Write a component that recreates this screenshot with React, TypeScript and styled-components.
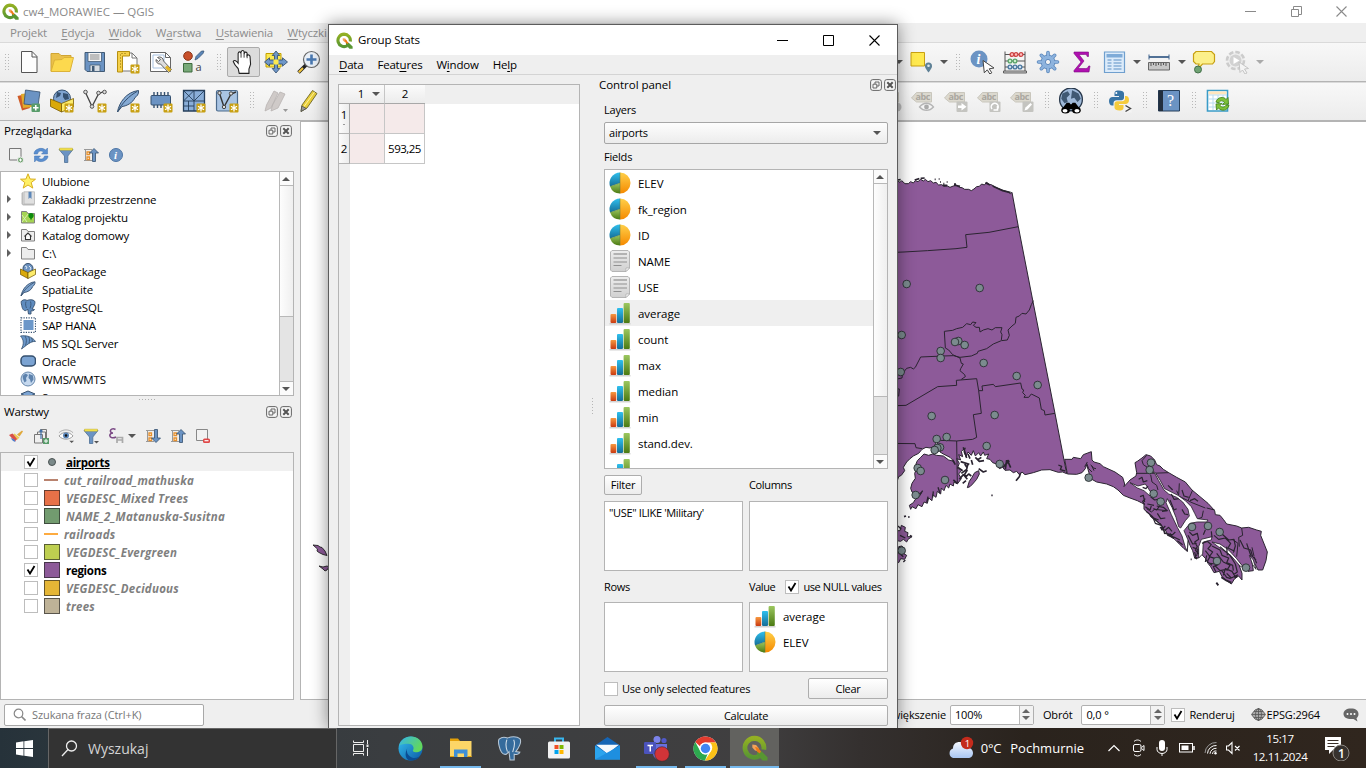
import React from "react";
import styled, { createGlobalStyle, css } from "styled-components";

const Global = createGlobalStyle`
  * { box-sizing: border-box; }
  body { margin: 0; background: #fff; overflow: hidden; }
  svg { display: block; flex: none; }
`;

const Desktop = styled.div`
  position: relative;
  width: 1366px;
  height: 768px;
  overflow: hidden;
  display: flex;
  flex-direction: column;
  background: #efefef;
  font-family: "Open Sans", "Noto Sans", sans-serif;
  font-size: 11.5px;
  letter-spacing: -0.15px;
  color: #000;
  white-space: nowrap;
  cursor: default;
`;

/* ---------- shared parts ---------- */
const Text = styled.span<{ $size?: number; $ls?: number; $color?: string }>`
  line-height: 16px;
  ${(p) => p.$size && css`font-size: ${p.$size}px;`}
  ${(p) => p.$ls !== undefined && css`letter-spacing: ${p.$ls}px;`}
  ${(p) => p.$color && css`color: ${p.$color};`}
`;
const Spacer = styled.div<{ $w?: number }>`
  ${(p) => (p.$w ? css`flex: 0 0 ${p.$w}px;` : css`flex: 1;`)}
`;
const Key = styled.u`
  text-underline-offset: 2px;
`;

type IcoProps = { s?: number; vb?: string; children: React.ReactNode; h?: number };
const Ico = ({ s = 24, h, vb = "0 0 24 24", children }: IcoProps) => (
  <svg width={s} height={h ?? s} viewBox={vb} fill="none">
    {children}
  </svg>
);

const QgisLogo = ({ s = 17 }: { s?: number }) => (
  <Ico s={s}>
    <defs>
      <linearGradient id="qg" x1="0" y1="0" x2="0" y2="1">
        <stop offset="0" stopColor="#93b023" />
        <stop offset="1" stopColor="#589632" />
      </linearGradient>
    </defs>
    <path d="M11.500 3a8.800 8.800 0 1 0 4.500 16.400M11.500 3a8.800 8.800 0 0 1 8.600 10.500" stroke="url(#qg)" strokeWidth="4.400" />
    <path d="M14 15h4l5.500 5.500v3h-4.500L14 18.500z" fill="#589632" />
    <path d="M9.500 8.800l3.500.4 2.500 3-1 2.500-2.500-.5-2.500-2.700z" fill="#f2a25a" />
    <path d="M12 11l2.500.5 3 3.500-1 2-2.500-1.500z" fill="#ee7913" />
  </Ico>
);

const PlusBadge = () => (
  <g>
    <rect x="14.500" y="14.500" width="8.500" height="8.500" rx="1" fill="#589c6a" />
    <path d="M18.750 16v5.500M16 18.750h5.500" stroke="#fff" strokeWidth="1.600" />
  </g>
);
const StarBadge = () => (
  <g>
    <rect x="14.500" y="14.500" width="9" height="9" rx="1" fill="#c8a012" />
    <path d="M19 15.500v7M16 17.300l6 3.400M22 17.300l-6 3.400" stroke="#fff" strokeWidth="1.300" />
  </g>
);

/* ---------- toolbar icons ---------- */
const I: Record<string, React.ReactNode> = {
  newDoc: <Ico><path d="M4.500 1.500h10.500l5 5v16h-15.500z" fill="#fdfdfd" stroke="#555" /><path d="M15 1.500v5.500h5" stroke="#555" /></Ico>,
  open: <Ico><path d="M1 21V3.500h8l2 2h10V9" fill="#eac04a" stroke="#d0a534" /><path d="M1 21.500L4.500 10l7.500-.5 2-2h9.500L20 21.500z" fill="#fcd94e" stroke="#dcb238" /></Ico>,
  save: <Ico><path d="M2 2.500h19.500v19H4L2 19.500z" fill="#6b93c3" stroke="#415a75" /><path d="M5 2.500h13.500v9H5z" fill="#f4f4f4" stroke="#415a75" strokeWidth=".8" /><path d="M7 5h9.500M7 7h9.500M7 9h9.500" stroke="#888" /><path d="M7 15h10v6.500H7z" fill="#d6dce2" stroke="#415a75" strokeWidth=".8" /><path d="M9 16h2.500v5H9z" fill="#415a75" /></Ico>,
  layout: <Ico><path d="M6 3h10l5 5v13H6z" fill="#fff" stroke="#777" /><path d="M16 3v5h5" stroke="#777" /><path d="M1.500 1.500h12v4.500H6.500v16h-5z" fill="#f5d04a" stroke="#b58f10" /><path d="M4 5h1M4 8h1M4 11h1M4 14h1M4 17h1M6 3v1M9 3v1" stroke="#8a6d0a" /><StarBadge /></Ico>,
  manager: <Ico><path d="M1.500 2.500h15l5 5v14h-20z" fill="#fff" stroke="#666" /><path d="M16.500 2.500v5h5" stroke="#666" /><path d="M4 5h11v13H4z" stroke="#a7c1e0" /><path d="M8.500 7.500a4 4 0 0 1 6 3.500l8 8.500-3 3-8-8.500a4 4 0 0 1-4.500-4.500l2.500 2 2-2z" fill="#ddd" stroke="#555" strokeWidth=".9" /><path d="M18 15.500l4.500 4-2.500 2.500-4-4.500z" fill="#e2b526" /></Ico>,
  style: <Ico><circle cx="6" cy="6" r="4.300" fill="#c8502a" stroke="#8b3518" /><path d="M1.500 13.500h8.500v8.500H1.500z" fill="#78a978" stroke="#3e6b3e" /><path d="M13 10l1-3.500 5.500-5.500h2.500L21 3.500 16 8.500z" fill="#5b86b8" stroke="#35506f" strokeWidth=".7" /><text x="13.500" y="21" fontSize="11" fill="#444">a</text></Ico>,
  hand: <Ico s={26}><path d="M8.500 22.500L7.500 18C5 15.500 3.500 13 3 11.500c1-1.800 3-.6 4.500 1.500V4c.5-2 2.300-1.600 2.500 0l.3-1.500c.6-1.600 2.400-1.400 2.700 0l.2 1.200c.6-1.300 2.300-1 2.600.3v2c1-1.200 2.500-.5 2.700 1l.5 7-1.500 4.500v4z" fill="#fff" stroke="#222" /><path d="M10.200 4v4M13 3.500V8M15.800 5v3.500" stroke="#222" strokeWidth=".8" /></Ico>,
  panSel: <Ico><path d="M2 3.500h15v13.500H2z" fill="#fce94f" stroke="#c4a000" /><path d="M12 1l3.800 4.500h-2.300V10h5V7.800L23.500 12l-5 4.200V14h-5v4.500h2.300L12 23l-3.800-4.500h2.300V14h-5v2.200L.5 12l5-4.200V10h5V5.500H8.200z" fill="#6f97c8" stroke="#2e4a6b" strokeWidth=".8" /><rect x="9.500" y="9.500" width="5" height="5" fill="#fce94f" /></Ico>,
  zoomIn: <Ico><path d="M9.500 14.500l-8 8" stroke="#222" strokeWidth="3.600" /><path d="M6 18l-4.200 4.200" stroke="#f3c63b" strokeWidth="2" /><circle cx="14.500" cy="9.500" r="8" fill="#e9eff6" stroke="#666" strokeWidth="1.200" /><path d="M14.500 4.500v10M9.500 9.500h10" stroke="#4a78b0" strokeWidth="2.600" /></Ico>,
  dsm: <Ico><path d="M.5 7L9 5l4 14-8 2.500z" fill="#cf5b27" /><path d="M4 5l9-1 2 14-9 1z" fill="#e2ab2c" /><path d="M8.500 1l14.500 2-2 13.500L7 15z" fill="#6b93c3" stroke="#35506f" strokeWidth=".8" /><PlusBadge /></Ico>,
  gpkg: <Ico><circle cx="12" cy="9.500" r="8.500" fill="#7fa3cf" stroke="#35506f" /><path d="M7 3l4 1-1 3-4 2zM13 4l5 1 1 5-4 1-2-3z" fill="#35506f" /><path d="M.5 10l11 4.500v8.500L.5 17.500z" fill="#d9a90a" stroke="#7a5c00" strokeWidth=".8" /><path d="M23.500 9.500L11.500 14.500v8.500l12-5z" fill="#fceb6b" stroke="#7a5c00" strokeWidth=".8" /><StarBadge /></Ico>,
  shp: <Ico><path d="M2.500 3.500l6.500 14 6.500-12.500 5-2.500" stroke="#444" strokeWidth="1.300" /><circle cx="2.500" cy="3" r="1.800" fill="#ddd" stroke="#555" /><circle cx="9" cy="17.500" r="1.800" fill="#ddd" stroke="#555" /><circle cx="15.500" cy="4" r="1.800" fill="#ddd" stroke="#555" /><circle cx="21.500" cy="3" r="1.800" fill="#ddd" stroke="#555" /><StarBadge /></Ico>,
  feather: <Ico><path d="M1.500 23C3 14 10 3 22.500 1.500c.5 4-2 6-3.500 7-2 5-8 8.500-13 9z" fill="#85aad4" stroke="#35506f" /><path d="M1.500 23C6 14 13 7 21 2.500" stroke="#35506f" /><StarBadge /></Ico>,
  chip: <Ico><path d="M5 3v16M8.500 3v16M12 3v16M15.500 3v16M19 3v16" stroke="#35506f" strokeWidth="1.400" /><rect x="2" y="6.500" width="19.500" height="9.500" rx="1" fill="#6b93c3" stroke="#35506f" /><StarBadge /></Ico>,
  mesh: <Ico><path d="M1.500 1.500h21v20.500h-21z" fill="#8aaed8" stroke="#263f5b" strokeWidth="1.300" /><path d="M12 1.500V22M1.500 12h21M1.500 1.500L12 12M12 1.500L1.500 12M12 12L22.500 1.500M6.500 12v10M1.500 17H12" stroke="#263f5b" strokeWidth=".9" /><StarBadge /></Ico>,
  virtual: <Ico><rect x="1.500" y="1.500" width="21" height="20.500" rx="1.500" fill="#a9c4e3" stroke="#4b6a8c" strokeWidth="1.200" /><path d="M4.500 4.500L9 18 16 5l5-2" stroke="#333" strokeWidth="1.400" /><circle cx="4.500" cy="4" r="1.700" fill="#ddd" stroke="#444" /><circle cx="9" cy="18" r="1.700" fill="#ddd" stroke="#444" /><circle cx="16" cy="4.500" r="1.700" fill="#ddd" stroke="#444" /><StarBadge /></Ico>,
  pencils: <Ico><path d="M1 22l1.500-6L10 2l4 2-7 15zM7 22l1.500-6L16 3l5 2-7 14z" fill="#cfcac8" stroke="#b8b3b1" strokeWidth=".8" /><path d="M19 20h5l-2.500 3z" fill="#999" /></Ico>,
  pencil: <Ico><path d="M4 22.500l1-6.500L15.500 1.500l4.500 3L10 19z" fill="#e9cf3c" stroke="#6d6426" strokeWidth=".9" /><path d="M7 17.500L17.500 3" stroke="#fff3a0" /><path d="M4 22.500l.8-5.500 4.500 2.500z" fill="#999" stroke="#444" strokeWidth=".7" /></Ico>,
  note: <Ico><path d="M2 2.500h13.500v13.500H2z" fill="#ffe94f" stroke="#c8a012" /><path d="M19.500 22.500c-3-4-3.500-5-3.500-6.500a3.500 3.500 0 0 1 7 0c0 1.500-.5 2.500-3.500 6.500z" fill="#5f8196" /><circle cx="19.500" cy="15.800" r="1.300" fill="#dfe9ef" /></Ico>,
  identify: <Ico><circle cx="9" cy="9" r="8.500" fill="#6b93c3" /><text x="6.500" y="14" fontSize="14" fontStyle="italic" fontWeight="700" fontFamily="Liberation Serif, serif" fill="#fff">i</text><path d="M13 10.500l11 7.500-4.800.8 2.600 4-2 1.200-2.500-4.200-3 3z" fill="#fff" stroke="#444" /></Ico>,
  abacus: <Ico><path d="M2 22V1.500M22 22V1.500M2 4.500h20M2 11h20M2 17h20" stroke="#555" /><path d="M.5 21h23v2H.5z" fill="#ccc" stroke="#444" strokeWidth=".8" /><g strokeWidth="1.300"><g stroke="#c44" fill="#fbb"><circle cx="9" cy="4.500" r="1.900" /><circle cx="13" cy="4.500" r="1.900" /><circle cx="18" cy="4.500" r="1.900" /></g><g stroke="#5aa36a" fill="#cec"><circle cx="7" cy="11" r="1.900" /><circle cx="12" cy="11" r="1.900" /></g><g stroke="#4a78a0" fill="#cde"><circle cx="7" cy="17" r="1.900" /><circle cx="12" cy="17" r="1.900" /><circle cx="17" cy="17" r="1.900" /></g></g></Ico>,
  gear: <Ico><g stroke="#5d89bd" strokeWidth="3.600" strokeLinecap="round"><path d="M12 2.500v19M2.500 12h19M5.300 5.300l13.400 13.400M18.700 5.300L5.300 18.700" /></g><circle cx="12" cy="12" r="7" fill="#8db3de" stroke="#5d89bd" /><g stroke="#8db3de" strokeWidth="2" strokeLinecap="round"><path d="M12 2.500v19M2.500 12h19M5.300 5.300l13.400 13.400M18.700 5.300L5.300 18.700" /></g><circle cx="12" cy="12" r="2.600" fill="#f4f4f4" stroke="#5d89bd" /></Ico>,
  sigma: <Ico><path d="M5 2h14.500v4.500h-1.300c-.3-1.500-1-2-2.500-2H10l5 6.500-6 7.500h7.700c1.600 0 2.300-.8 3-2.500H21L20 22H5v-1.500l7-8.500-7-8.500z" fill="#b010b0" stroke="#7b0b80" strokeWidth=".6" /></Ico>,
  table: <Ico><path d="M2.500 2h20v20.500h-20z" fill="#dcebfa" stroke="#6f9fce" strokeWidth="1.200" /><path d="M4.500 4h16v3.500h-16z" fill="#7eabd8" /><path d="M5.500 10h4M11.500 10h8M5.500 13h4M11.500 13h8M5.500 16h4M11.500 16h8M5.500 19h4M11.500 19h8" stroke="#5a8fc4" strokeWidth="1.200" /></Ico>,
  ruler: <Ico><path d="M2 7h20" stroke="#3f628c" strokeWidth="1.800" /><path d="M2 4.500v5M22 4.500v5" stroke="#3f628c" /><path d="M1.500 12.500h21v7.500h-21z" fill="#c6c6c6" stroke="#666" /><path d="M4 13v3M6.500 13v2M9 13v3M11.500 13v2M14 13v3M16.500 13v2M19 13v3" stroke="#555" /></Ico>,
  tip: <Ico><path d="M4 1.500h15.500l3 3v7l-2 2.500h-10L6 19l1-5H4l-2.500-2.500V4z" fill="#fcf08a" stroke="#c8a012" strokeWidth="1.200" /><circle cx="6" cy="19.500" r="3.500" fill="#6fa373" stroke="#44704a" /></Ico>,
  action: <Ico><circle cx="10.500" cy="10.500" r="8.500" fill="#eee" stroke="#ccc" strokeWidth="2.600" strokeDasharray="4.600 2" /><circle cx="10.500" cy="10.500" r="6" fill="#d2d2d2" /><path d="M8.500 7l6 3.500-6 3.500z" fill="#fff" /><path d="M14 12l9.500 6.500-4 .5 2.500 4-2 1-2.500-4-2.500 2.500z" fill="#f4f4f4" stroke="#c4c4c4" /></Ico>,
  globe: <Ico s={26}><circle cx="12" cy="10.500" r="10.500" fill="#9fb9d9" stroke="#27374a" strokeWidth="1.200" /><path d="M4 5l5-2 2 3-3 3 1 4-3 1-3-4zM13 2l6 3 2 5-3 3-3-4-3 1z" fill="#3f5873" /><path d="M8 13.500h2.500l1 1.500h1l1-1.500H16l4.500 6H3.500z" fill="#000" /><ellipse cx="7" cy="20.500" rx="4" ry="3" fill="#000" /><ellipse cx="17" cy="20.500" rx="4" ry="3" fill="#000" /><ellipse cx="6.500" cy="21" rx="2.300" ry="1.600" fill="#fff" /><ellipse cx="17.500" cy="21" rx="2.300" ry="1.600" fill="#fff" /></Ico>,
  python: <Ico><path d="M10.500 1.500c-3.500 0-4 1.500-4 3V7h4.500v1H4.500C2.500 8 1 9.500 1 12s1.200 4.500 3 4.500h1.500v-2.300c0-1.700 1.300-3 3-3h5c1.300 0 2.500-1.200 2.500-2.500V4.500c0-2-2-3-5.500-3z" fill="#3874a5" /><path d="M11.500 21.500c3.500 0 4-1.500 4-3V16H11v-1h6.500c2 0 3.500-1.500 3.500-4S19.800 7 18 7h-1v2.500c0 1.700-1.300 2.800-3 2.800H9c-1.300 0-2.500 1.200-2.500 2.500v3.700c0 2 2 3 5 3z" fill="#f5cb3c" /><circle cx="8.300" cy="4" r="1" fill="#fff" /><path d="M16.500 15.500h7v8h-7z" fill="#f4f4f4" /><path d="M17.500 16.500l5 3-5 3" stroke="#444" strokeWidth="1.400" /></Ico>,
  help: <Ico><path d="M1.500 1.500h21v20.500h-21z" fill="#6b93c3" stroke="#263f5b" /><path d="M1.500 1.500h4.500v20.500H1.500z" fill="#222f3e" /><text x="10" y="17" fontSize="16" fontFamily="Liberation Serif, serif" fill="#fff">?</text></Ico>,
  refreshTable: <Ico><path d="M1.500 1.500h20v20.500h-20z" fill="#fff" stroke="#3a9cc8" strokeWidth="1.600" /><path d="M2.500 2.500h18v3h-18z" fill="#ffe6bd" /><path d="M7 6v15M12 6v15M17 6v15M2 6h19M2 10h19M2 14h19M2 18h19" stroke="#b9dcf0" /><path d="M10 13c1-5 8-6 10-2.500L22 8.500l.5 6.500-6 .5 2-2c-2-2.500-5-2-5.500.5zM23 16c-1 6-8 6.500-10.500 3l-2 2-.5-6 6-.5-2 2c2 2.500 5.500 1.500 6-.5z" fill="#7cc03a" stroke="#3d7d12" strokeWidth=".8" /></Ico>,
};

const LabelTag = ({ kind }: { kind: "ball" | "eye" | "arrow" | "rotate" | "edit" }) => (
  <Ico>
    <path d="M.5 9l5-5.500h15v9.500H5.500z" fill="#dcd9cf" stroke="#c9c6bc" />
    <text x="4.500" y="11" fontSize="9" fontFamily="Open Sans, sans-serif" fontWeight="700" letterSpacing="-.4" fill="#aaa79f">abc</text>
    {kind === "ball" && <circle cx="19" cy="18" r="4.500" fill="#bbb" />}
    {kind === "eye" && <g><path d="M8.500 18c4-5 10-5 14 0-4 4.500-10 4.500-14 0z" fill="#f4f4f4" stroke="#b5b5b5" strokeWidth="1.300" /><circle cx="15.500" cy="18" r="2.400" fill="#aaa" /></g>}
    {(kind === "arrow" || kind === "rotate" || kind === "edit") && <rect x="12.500" y="12.500" width="11" height="10.500" rx="1" fill="#c4c4c0" />}
    {kind === "arrow" && <path d="M14 16.500h3.500V14l5 3.800-5 3.800v-2.500H14z" fill="#fff" />}
    {kind === "rotate" && <path d="M15 20a3.500 3.500 0 1 1 5 .5M20.500 17v4h-4" stroke="#fff" strokeWidth="1.500" />}
    {kind === "edit" && <path d="M14.500 21.500l1-3 5-4.500 1.500 1.500-4.500 5z" fill="#fff" />}
  </Ico>
);

/* ---------- QGIS main window chrome ---------- */
const TitleBar = styled.div`
  height: 23px;
  flex: none;
  background: #fff;
  display: flex;
  align-items: center;
  padding-left: 2px;
  color: #8a8a8a;
`;
const MenuBar = styled.div`
  height: 19px;
  flex: none;
  display: flex;
  align-items: center;
  padding: 1px 0 0 10px;
  gap: 14.3px;
  color: #8c8c8c;
  background: #efefef;
`;
const Toolbar = styled.div<{ $h: number; $lift?: number }>`
  height: ${(p) => p.$h}px;
  flex: none;
  display: flex;
  align-items: center;
  padding: 0 0 ${(p) => p.$lift ?? 0}px 0.5px;
  border-top: 1px solid #dadada;
  border-bottom: 1px solid #b4b4b4;
  background: linear-gradient(#f8f8f8, #ececec);
`;
const Slot = styled.div<{ $active?: boolean }>`
  flex: 0 0 33px;
  height: 30px;
  display: flex;
  align-items: center;
  justify-content: center;
  ${(p) => p.$active && css`
    background: #dcdcdc;
    border: 1px solid #ababab;
    border-radius: 2px;
  `}
`;
const Grip = styled.div<{ $w?: number }>`
  flex: 0 0 ${(p) => p.$w ?? 16}px;
  display: flex;
  justify-content: center;
  &::before {
    content: "";
    width: 4px;
    height: 17px;
    background: repeating-linear-gradient(#b8b8b8 0 1px, transparent 1px 3px);
    mask: linear-gradient(90deg, #000 1px, transparent 1px 3px, #000 3px);
  }
`;
const Drop = styled.div<{ $w?: number; $c?: string }>`
  flex: 0 0 ${(p) => p.$w ?? 12}px;
  display: flex;
  justify-content: center;
  &::before {
    content: "";
    border: 4px solid transparent;
    border-top-color: ${(p) => p.$c ?? "#555"};
    border-bottom: 0;
  }
`;
const WinButtons = styled.div<{ $c: string; $gap: number; $pad: number }>`
  display: flex;
  align-items: center;
  gap: ${(p) => p.$gap}px;
  padding-right: ${(p) => p.$pad}px;
  color: ${(p) => p.$c};
`;
const WinIcons = ({ restore }: { restore?: boolean }) => (
  <>
    <Ico s={11} vb="0 0 11 11"><path d="M0 5.500h11" stroke="currentColor" /></Ico>
    <Ico s={11} vb="0 0 11 11">
      {restore ? <path d="M.5 3.500h7v7h-7zM2.500 3.500v-3h8v8h-3" stroke="currentColor" /> : <path d="M.5.5h10v10H.5z" stroke="currentColor" />}
    </Ico>
    <Ico s={11} vb="0 0 11 11"><path d="M.5.5l10 10M10.500.5l-10 10" stroke="currentColor" strokeWidth="1.100" /></Ico>
  </>
);

/* ---------- docks ---------- */
const Body = styled.div`
  height: 580px;
  flex: none;
  display: flex;
`;
const Docks = styled.div`
  width: 300px;
  display: flex;
  flex-direction: column;
`;
const DockHead = styled.div<{ $h: number }>`
  height: ${(p) => p.$h}px;
  flex: none;
  display: flex;
  align-items: center;
  padding: 0 8px 0 4px;
  gap: 2px;
`;
const DockBtn = ({ close }: { close?: boolean }) => (
  <Ico s={12} vb="0 0 12 12">
    <rect x=".6" y=".6" width="10.800" height="10.800" rx="2.200" stroke="#666" fill="#f6f6f6" />
    {close ? <path d="M3.300 3.300l5.400 5.400M8.700 3.300L3.300 8.700" stroke="#555" strokeWidth="2" /> : <path d="M3 5.200h3.800V9H3zM5 5V3h4v4H7" stroke="#666" />}
  </Ico>
);
const DockTools = styled.div<{ $h: number }>`
  height: ${(p) => p.$h}px;
  flex: none;
  display: flex;
  align-items: center;
  padding: 0 0 2px 8px;
  gap: 9px;
`;
const ToolWithMenu = styled.div`
  width: 28px;
  display: flex;
  align-items: center;
  gap: 4px;
`;
const Panel = styled.div<{ $h: number; $w?: number }>`
  width: ${(p) => p.$w ?? 294}px;
  height: ${(p) => p.$h}px;
  flex: none;
  background: #fff;
  border: 1px solid #b4b4b4;
  display: flex;
  overflow: hidden;
`;
const List = styled.div`
  flex: 1;
  overflow: hidden;
`;
const TreeRow = styled.div`
  height: 18px;
  display: flex;
  align-items: center;
  padding: 2px 0 0 6px;
`;
const Twist = styled.div<{ $on?: boolean }>`
  width: 13px;
  &::before {
    content: "";
    display: ${(p) => (p.$on ? "block" : "none")};
    width: 0;
    border: 4px solid transparent;
    border-left-color: #606060;
    border-right: 0;
    margin-top: -3px;
  }
`;
const TreeIcon = styled.div`
  width: 16px;
  margin-right: 6px;
  margin-top: -2px;
`;
const Bar = styled.div`
  width: 14px;
  flex: none;
  display: flex;
  flex-direction: column;
  border-left: 1px solid #b8b8b8;
  background: #e4e4e4;
`;
const BarEnd = styled.div<{ $down?: boolean }>`
  height: 14px;
  flex: none;
  background: #fbfbfb;
  border-${(p) => (p.$down ? "top" : "bottom")}: 1px solid #b8b8b8;
  display: flex;
  align-items: center;
  justify-content: center;
  padding-right: 1px;
  &::before {
    content: "";
    border: 4px solid transparent;
    ${(p) => (p.$down ? "border-top-color: #555; border-bottom: 0;" : "border-bottom-color: #555; border-top: 0;")}
  }
`;
const Thumb = styled.div<{ $h: number }>`
  height: ${(p) => p.$h}px;
  background: linear-gradient(90deg, #fdfdfd, #efefef);
  border-bottom: 1px solid #b8b8b8;
`;
const Splitter = styled.div<{ $h: number }>`
  height: ${(p) => p.$h}px;
  width: 294px;
  flex: none;
  display: flex;
  justify-content: center;
  align-items: center;
  &::before {
    content: "";
    width: 17px;
    height: 1px;
    background: repeating-linear-gradient(90deg, #b0b0b0 0 1px, transparent 1px 3px);
  }
`;

const Folder = ({ children, fill = "#ededed" }: { children?: React.ReactNode; fill?: string }) => (
  <Ico s={16} vb="0 0 16 16"><path d="M1.500 2.500h5l1.500 2h6.500v9.500h-13z" fill={fill} stroke="#808080" />{children}</Ico>
);
const browser: [string, boolean, React.ReactNode][] = [
  ["Ulubione", false, <Ico s={16} vb="0 0 16 16"><path d="M8 .8l2.100 5.200 5.400.2-4.300 3.400 1.600 5.500L8 12l-4.800 3.100 1.600-5.500L.5 6.200l5.400-.2z" fill="#fff066" stroke="#d8ae1e" /></Ico>],
  ["Zakładki przestrzenne", true, <Ico s={16} vb="0 0 16 16"><path d="M1.500 2l2-1.500V13h11v1.500H3L1.500 13z" fill="#bbb" /><path d="M4 .8h10.500V13H4z" fill="#e0e0e0" stroke="#b5b5b5" strokeWidth=".8" /><path d="M8.500.8h3V8L10 6.500 8.500 8z" fill="#5b86b8" /></Ico>],
  ["Katalog projektu", true, <Folder fill="#a6d454"><path d="M2 6l5 7M2 13l6-8" stroke="#d9f0b0" /><circle cx="11" cy="6.500" r="2.600" fill="#0c8a0c" /><path d="M9.500 8l1.500 3.500L12.500 8z" fill="#0c8a0c" /></Folder>],
  ["Katalog domowy", true, <Folder><path d="M4.500 9.500L8 6l3.500 3.500M5.500 9v3.500h5V9" stroke="#333" strokeWidth="1.100" fill="#fff" /></Folder>],
  ["C:\\", true, <Folder />],
  ["GeoPackage", false, <Ico s={16} vb="0 0 16 16"><circle cx="8" cy="5.500" r="5" fill="#6d93c0" stroke="#35506f" /><path d="M5 3l2 1-1 2M9 3l2 2-1 2" stroke="#dce8f5" /><path d="M.5 6l7.500 3.500v6L.5 11.500z" fill="#d9a90a" stroke="#6b5200" strokeWidth=".7" /><path d="M15.500 6L8 9.500v6l7.500-4z" fill="#fceb6b" stroke="#6b5200" strokeWidth=".7" /></Ico>],
  ["SpatiaLite", false, <Ico s={16} vb="0 0 16 16"><path d="M1 15C2 9 7 1.500 15 .8c.3 2.700-1.500 4-2.300 4.700C11.500 9 8 11 4 11.500z" fill="#7ea4cf" stroke="#35506f" strokeWidth=".9" /><path d="M1 15C4 9 8 5 14 1.500" stroke="#35506f" strokeWidth=".8" /></Ico>],
  ["PostgreSQL", false, <Ico s={16} vb="0 0 16 16"><path d="M1.500 2C4 0 6 .8 7 1.500 9 .5 13 .3 14.500 2c1.300 2-.5 5.500-2.500 8l2.500.5c-.7 1.500-2.500 1.500-3.500 1.200V15H8.500l-.8-5-1.500 1.500c-2.700.8-4-2-4.500-5C1.200 4 .9 3 1.500 2z" fill="#5f8cbf" stroke="#35506f" strokeWidth=".9" /><path d="M6 2.500c-1 3 0 5 .5 6.500M10.500 2.500c1 3 0 5-.5 7" stroke="#35506f" strokeWidth=".8" /></Ico>],
  ["SAP HANA", false, <Ico s={16} vb="0 0 16 16"><rect x="3.500" y="3" width="10" height="10" fill="#6b97c9" /><rect x="1" y=".8" width="14.500" height="14.500" stroke="#35506f" strokeWidth="1.200" strokeDasharray="1.200 1.300" /></Ico>],
  ["MS SQL Server", false, <Ico s={16} vb="0 0 16 16"><path d="M.5 1c5-1 12 .5 15 5.500-5-.5-9 4-14 7.500C4 9 4 5 .5 1z" fill="#6b97c9" stroke="#35506f" strokeWidth=".8" /><path d="M5 1c2 3 1.500 6 .5 9.500M8.500 1.500c1.500 2.500 1 4.500.5 7M11.500 3c1 1.500 1 2.500.5 4" stroke="#35506f" strokeWidth=".8" /></Ico>],
  ["Oracle", false, <Ico s={16} vb="0 0 16 16"><rect x="1" y="3" width="14.500" height="10" rx="4" fill="#7ba3d2" stroke="#35506f" strokeWidth="1.500" /></Ico>],
  ["WMS/WMTS", false, <Ico s={16} vb="0 0 16 16"><circle cx="8" cy="8" r="7" fill="#c5d8ee" stroke="#6787ab" /><path d="M2.500 5l3-2.500L8 4 6 7l.5 3-2 1.500L3 8zM9 3l4 1.500.5 4L11 12l-1-3.500L8.500 7z" fill="#5d82ad" /></Ico>],
  ["Scenes", false, <Ico s={16} vb="0 0 16 16"><path d="M1 5l7-3 7 3-7 3z" fill="#7ba3d2" stroke="#35506f" /></Ico>],
];

const LayerRow = styled.div<{ $sel?: boolean }>`
  height: 18px;
  display: flex;
  align-items: center;
  padding-left: 23px;
  background: ${(p) => (p.$sel ? "#f0f0f0" : "transparent")};
`;
const Check = styled.span`
  width: 14px;
  height: 14px;
  flex: none;
  border: 1px solid #bdbdbd;
  background: #fff;
  display: flex;
  align-items: center;
  justify-content: center;
`;
const CheckBox = ({ on }: { on?: boolean }) => (
  <Check>{on && <Ico s={10} vb="0 0 10 10"><path d="M1.500 4.500L4 8.500 8.500 1" stroke="#000" strokeWidth="1.800" /></Ico>}</Check>
);
const Swatch = styled.span<{ $c: string; $kind: "dot" | "line" | "fill" }>`
  flex: none;
  ${(p) =>
    p.$kind === "fill"
      ? css`width: 16px; height: 16px; margin: 0 6px; background: ${p.$c}; border: 1px solid rgba(35, 35, 35, 0.65);`
      : p.$kind === "line"
        ? css`width: 14px; height: 2px; margin: 0 6px; background: ${p.$c};`
        : css`width: 8px; height: 8px; margin: -1px 10px 0 10px; border-radius: 50%; background: ${p.$c}; border: 1px solid #4b5353;`}
`;
const LayerName = styled.span<{ $on?: boolean; $u?: boolean }>`
  font-weight: 700;
  font-size: 11.5px;
  letter-spacing: 0.25px;
  padding-top: 1px;
  ${(p) => (p.$on ? css`letter-spacing: -0.3px;` : css`font-style: italic; color: #7f7f7f;`)}
  ${(p) => p.$u && css`text-decoration: underline;`}
`;
type L = { n: string; c: string; k: "dot" | "line" | "fill"; on?: boolean; u?: boolean };
const layers: L[] = [
  { n: "airports", c: "#7b8a8a", k: "dot", on: true, u: true },
  { n: "cut_railroad_mathuska", c: "#b9836f", k: "line" },
  { n: "VEGDESC_Mixed Trees", c: "#e77148", k: "fill" },
  { n: "NAME_2_Matanuska-Susitna", c: "#729b6f", k: "fill" },
  { n: "railroads", c: "#fdab40", k: "line" },
  { n: "VEGDESC_Evergreen", c: "#becf50", k: "fill" },
  { n: "regions", c: "#8d5a99", k: "fill", on: true },
  { n: "VEGDESC_Deciduous", c: "#e5b636", k: "fill" },
  { n: "trees", c: "#beb297", k: "fill" },
];

const treeArrow = (up: boolean) => (
  <Ico s={16} vb="0 0 16 16">
    <path d="M1 2.500h8M1 13.500h8M2.500 2v11" stroke="#999" /><path d="M4 5h2.500v2.500H4zM4 10h2.500v2.500H4z" fill="#fff" stroke="#e8912d" strokeWidth="1.300" />
    {up ? <path d="M11 1.500L15.500 6h-3v8.500h-3V6h-3z" fill="#6b93c3" stroke="#35506f" strokeWidth=".8" /> : <path d="M11 14.500L6.500 10h3V1.500h3V10h3z" fill="#6b93c3" stroke="#35506f" strokeWidth=".8" />}
  </Ico>
);
const funnel = (drop?: boolean) => (
  <Ico s={16} vb="0 0 16 16"><path d="M1 2.500h14L9.800 9v6.500H6.500V9z" fill="#6b93c3" stroke="#4d7096" strokeWidth=".8" /><path d="M1.500 1.200h13v2h-13z" fill="#fbe94e" stroke="#b9a321" strokeWidth=".5" />{drop && <path d="M11 13h5l-2.500 2.500z" fill="#555" />}</Ico>
);

/* ---------- map ---------- */
const MapView = styled.div`
  flex: 1;
  height: 579px;
  background: #fff;
  border: 1px solid #b4b4b4;
  border-width: 1px 0 1px 1px;
  overflow: hidden;
`;
const mainDots = [[50, 372], [269, 384], [35, 525], [205, 543], [195, 546], [224, 555], [152, 573], [152, 594], [32, 636], [281, 609], [380, 648], [443, 675], [125, 768], [314, 765], [140, 837], [170, 831], [150, 862], [142, 864], [134, 870], [290, 858], [329, 912], [83, 924], [92, 933], [165, 960], [77, 1005], [35, 1172]];
const southDots = [[86, 143], [273, 98], [269, 120], [281, 191], [302, 215], [396, 291], [444, 288], [479, 306], [471, 393], [558, 413]];
const Airports = ({ pts }: { pts: number[][] }) => (
  <g fill="#7b8b8e" stroke="#262c2e" strokeWidth="2.600">
    {pts.map(([x, y]) => <circle key={`${x}-${y}`} cx={x} cy={y} r="11.500" />)}
  </g>
);
const MapDrawing = () => (
  <svg width="1065" height="577" viewBox="301 122 1065 577" fill="none" strokeLinejoin="round">
    <path fill="#8d5a99" stroke="#232323" strokeWidth=".9" d="M313 545L318 545.500 320 547 322 547.500 325 551 327 555.500 323 554.500 319 552.500 317 551 317.500 549zM319 566L323 567 327 566 329 567 327 570 325 571 323 569z" />
    <g transform="translate(890 160) scale(.33333)" stroke="#2a2430" strokeWidth="3">
      <path
        fill="#8d5a99"
        d="M-20 62L22 62 30 67 35 62 45 71 55 71 62 65 70 69 76 62 84 65 92 58 100 63 106 58 114 65 122 62 130 69 138 67 146 75 155 74 162 79 172 78 180 82 190 78 200 76 208 82 216 83 224 88 236 88 244 92 252 87 260 80 268 79 275 72 283 75 290 67 298 73 306 75 314 81 322 84 332 88 342 92 355 96 361 101 366 97 385 200 428 420 495 760 530 941 518 936 505 937 480 929 455 930 430 938 405 944 396 936 388 944 380 934 370 938 360 930 345 931 338 922 328 926 320 912 308 908 300 898 290 896 296 882 284 886 280 876 272 888 266 878 256 888 250 872 244 886 234 876 228 890 222 876 226 864 214 874 218 890 206 884 212 900 200 896 208 910 202 925 216 930 206 942 214 956 202 972 192 966 190 978 180 972 176 984 168 976 162 992 154 984 152 1002 142 994 138 1012 128 1004 126 1022 116 1014 112 1030 102 1026 96 1040 84 1034 78 1046 66 1040 62 1048 58 1036 70 1028 76 1018 88 1010 94 998 80 1004 66 996 62 985 66 970 76 955 74 940 80 926 78 912 82 902 92 892 102 882 116 886 128 882 140 886 160 888 176 900 192 904 180 892 160 882 150 876 158 866 148 858 140 846 132 860 120 864 108 862 96 868 86 880 70 888 60 896 50 906 40 922 44 932 34 946 26 950 22 962 -20 990Z"
      />
      <path fill="#8d5a99" d="M10 1112L30 1112 34 1096 46 1102 44 1114 54 1118 52 1130 66 1130 54 1138 50 1146 40 1138 32 1144 10 1140zM10 1180L26 1160 36 1158 42 1166 36 1178 50 1186 44 1198 32 1196 26 1208 10 1200zM232 983L238 964 246 952 254 938 266 932 268 942 260 958 248 972 240 980z" />
      <path d="M-10 278L42 276 112 272 198 266 231 262 227 224 297 217 385 200M-10 738L48 736 143 680 200 676 199 661 260 656 266 692 278 692 276 678 310 673 316 680 392 669 396 687 401 690 398 698 406 706 402 712 416 712 424 702 448 714 454 748 463 752 465 765 495 760" />
      <path d="M-10 657L22 657 36 654 38 640 50 625 62 622 70 627 76 622 92 591 160 588 190 587 210 592 244 588 262 580 264 574 290 566 310 552 334 542 352 540 358 526 354 510 366 498 376 490 378 472 388 468 396 460 408 462 418 450 424 434 430 422" />
      <path d="M163 514L188 511 200 506 218 502 230 491 242 494 248 486 258 488 250 496 258 502 268 502 270 516 280 510 294 506 306 510 316 503 336 503 332 516 336 524 334 540M163 514L166 564 176 570 188 584 210 594 214 610 220 612 212 626 210 632 224 644 226 650 214 658M266 692L274 760 250 764 260 832 248 838 200 843 202 970M150 841L200 843M-10 850L75 851 78 863 96 866M0 685L28 687 26 708 20 712" />
      <path d="M220 862l10 32M214 940l16-12 4-18M208 958l12-14 10 4M266 926l14 10 10-4M350 900l-4 28M356 900l-10 14M378 962l10-12 4-12M354 905l8 18M338 922l20-20M232 930l-10 16 10 12M262 900l12-8M240 896l-6-14M212 905l26 8M244 900l4 14M256 892l12 12 14-2M204 922l14 10M224 912l8 12M226 952l10-10 8 6M218 970l10-8M188 900l8 14M190 960l12 10" strokeWidth="5" />
      <path d="M505 915l10 4-4 10 14 4M110 1028l4-18M128 1012l2-18M150 1000l-6-18M90 1004l8-12M24 1098l10 10M30 1126l16 8M20 1172l20 18M40 1206l6-6" strokeWidth="4" />
      <path d="M74 60l14-4M92 55l12-1M134 58h3M146 57h3M150 66h3M160 71h3M170 66h3M158 76h14M192 72h6M42 1070l6-2M54 1071h5M304 1006h4M22 60l10-1M286 68l14 7M192 75l18 4M308 78l30 14 24 6M60 1126l6 4" strokeWidth="5" />
      <Airports pts={mainDots} />
    </g>
    <g transform="translate(1060 430) scale(.33333)" stroke="#2a2430" strokeWidth="3">
      <path
        fill="#8d5a99"
        d="M14 88L36 88 40 82 62 86 70 74 94 65 96 90 102 96 120 101 130 110 165 126 188 142 194 162 192 170 210 150 228 138 230 128 225 98 232 94 246 84 258 74 272 78 284 90 290 104 300 108 310 118 326 128 350 142 376 156 396 180 420 200 444 220 464 242 466 254 480 256 490 268 500 282 530 288 545 294 566 292 590 300 604 304 602 316 610 336 622 366 618 392 608 420 594 420 584 400 576 395 580 422 564 424 545 405 534 396 546 430 546 450 536 438 524 446 514 462 500 452 486 440 478 424 462 428 452 410 444 400 436 385 424 372 416 384 404 384 398 362 390 346 384 330 382 364 372 356 360 344 344 328 330 318 322 312 316 300 304 300 306 288 290 272 274 262 268 252 252 238 252 222 244 218 232 212 210 204 190 196 174 180 160 170 140 162 110 156 92 146 88 132 84 118 80 104 76 116 66 128 50 133 22 132Z"
      />
      <path d="M80 100l6 16 10 10M92 104l8 10 8 2M96 108l6 14M74 110l8-14M228 130L275 130 326 128M260 76L246 92 250 104 262 112M272 134L276 156 290 166 294 180M260 236L274 246 284 238 320 242M350 182L356 196 358 160M360 200L396 218 436 234M398 180L384 212M440 234L464 240M430 242L426 262 410 268M545 294L548 316 536 322 538 350M520 330L534 340 530 380M576 352L582 378" />
      <path fill="#fff" strokeWidth="2.600" d="M274 122L284 130 296 152 312 180 326 192 350 202 368 216 384 238 388 258 376 272 362 294 356 290 348 262 336 232 322 206 318 218 334 254 352 292 366 318 376 352 382 364 384 330 372 302 390 280 412 276 440 276 444 270 412 266 404 250 394 230 376 212 354 196 330 184 314 176 300 150 286 128zM416 350L424 328 456 320 454 330 430 336 428 372 416 384zM456 336L480 342 506 360 530 386 552 414 540 408 512 376 480 354zM210 158L234 168 256 162 272 186 270 198 252 182 232 174zM568 376L580 390 588 418 578 404z" />
      <g strokeWidth="3.600">
        <path d="M236 148l10-6 4 14 12-4M248 172l10 4 6-8M256 206l-8 8 6 10M272 200l12 10 10-2M334 192l8 16 14-2M324 166l14 14M300 226l-10 14-10-4M290 228l20 4 12 10-16 2M276 262l20 8M300 280l10 14 6-6M330 210l12 30 8-4M366 238l8 14 10 2M390 212l14-6 10 8M256 230l14 10 4-12M270 256l30 26M306 290l10 20 20 6M366 180l6 18 14 4M240 200l10-4 4 20M262 222l20 4" />
        <path d="M324 312l14 2 8-8M340 320l20 10M352 332l16 12M292 250l10 16 14-2M316 300l10-8 10 12M258 244l20 16 8 20 18 6M310 296l4 16M330 310l10 14" />
        <path d="M388 306l10 10 14-6 4 18-12 8 8 14-6 10 10 12M384 316l14 26 12-2M398 352l16 6-4 20M436 300l-6 14M426 340l16-6 12 10-10 12 14 10-10 14 18 6 8 18-14 6 8 16M436 362l14 18-8 14 14 12M456 348l24 12 6 16 20 8-6 14 18 8 2 16M470 370l20 26 20 10-10 16M480 350l30 26 16 26 6 24-12 8M462 316l14 12 20-4 16 16-8 14 20 10M486 312l20 18 16-2 4 20-6 20M540 330l12 24 20 6 6 20 10 10M560 340l10 30 4 10M582 380l8 20M500 430l14 14 20-10M484 420l16 22 12 4M456 322l-2-18M450 400l16 2M500 350l2 26M490 436l6-20 20 8 10 16M466 408l14 14 20-4M440 376l-4 20M404 366l4 18" />
        <path d="M392 388h3M469 458l6 8M404 382l8 4M524 444l8-8M484 442l16 10 14 6M300 292l10 6M322 314l20 10" strokeWidth="5.500" />
      </g>
      <Airports pts={southDots} />
    </g>
  </svg>
);

/* ---------- status bar ---------- */
const StatusBar = styled.div`
  height: 27px;
  flex: none;
  display: flex;
  align-items: center;
  padding-left: 4px;
`;
const Locator = styled.div`
  width: 200px;
  height: 22px;
  border: 1px solid #a8a8a8;
  border-radius: 2px;
  background: #fff;
  display: flex;
  align-items: center;
  gap: 6px;
  padding-left: 8px;
  color: #777;
`;
const Spin = styled.div<{ $w: number }>`
  width: ${(p) => p.$w}px;
  height: 20px;
  border: 1px solid #b0b0b0;
  border-radius: 2px;
  background: #fff;
  display: flex;
  align-items: center;
  justify-content: space-between;
  padding-left: 4px;
`;
const SpinBtns = styled.div`
  width: 14px;
  height: 18px;
  border-left: 1px solid #b8b8b8;
  background: #f2f2f2;
  display: flex;
  flex-direction: column;
  align-items: center;
  justify-content: center;
  gap: 3px;
  &::before, &::after { content: ""; border: 4px solid transparent; }
  &::before { border-bottom-color: #666; border-top: 0; }
  &::after { border-top-color: #666; border-bottom: 0; }
`;

/* ---------- Group Stats dialog ---------- */
const Dialog = styled.div`
  position: absolute;
  left: 328px;
  top: 24px;
  width: 570px;
  height: 704px;
  border: 1px solid #5c5c5c;
  border-bottom: 0;
  background: #efefef;
  box-shadow: 0 0 16px rgba(0, 0, 0, 0.45);
  clip-path: inset(-24px -24px 0 -24px);
  display: flex;
  flex-direction: column;
`;
const DialogTitle = styled.div`
  height: 30px;
  flex: none;
  background: #fff;
  display: flex;
  align-items: center;
  padding-left: 7px;
  gap: 5px;
`;
const DialogMenu = styled.div`
  height: 20px;
  flex: none;
  border-bottom: 1px solid #d4d4d4;
  display: flex;
  align-items: center;
  padding-left: 10px;
  gap: 14px;
  letter-spacing: -0.2px;
`;
const DialogBody = styled.div`
  flex: 1;
  display: flex;
`;
const Result = styled.div`
  width: 242px;
  height: 642px;
  margin: 9px 0 0 9px;
  border: 1px solid #b4b4b4;
  background: #fff;
  display: flex;
  flex-direction: column;
`;
const HeadRow = styled.div`
  height: 19px;
  flex: none;
  display: flex;
  background: #efefef;
`;
const HeadCell = styled.div<{ $w: number }>`
  width: ${(p) => p.$w}px;
  background: linear-gradient(#fbfbfb, #ececec);
  border-right: 1px solid #c6c6c6;
  border-bottom: 1px solid #a8a8a8;
  display: flex;
  align-items: center;
  justify-content: center;
  &:last-child { border-right: 0; }
`;
const GridRow = styled.div`
  height: 30px;
  flex: none;
  display: flex;
`;
const RowHead = styled.div`
  width: 11px;
  background: linear-gradient(90deg, #fbfbfb, #ececec);
  border-right: 1px solid #a8a8a8;
  border-bottom: 1px solid #b4b4b4;
  display: flex;
  flex-direction: column;
  align-items: center;
  justify-content: center;
`;
const SortTick = styled.span`
  width: 2px;
  height: 1px;
  margin: 1px 0 6px;
  background: #999;
`;
const Cell = styled.div<{ $w: number; $tint?: boolean }>`
  width: ${(p) => p.$w}px;
  background: ${(p) => (p.$tint ? "#f5eaea" : "#fff")};
  border-right: 1px solid #c6c6c6;
  border-bottom: 1px solid #c6c6c6;
  display: flex;
  align-items: center;
  justify-content: center;
`;
const Gutter = styled.div`
  flex: 1;
  width: 11px;
  background: #efefef;
`;
const SideGrip = styled.div`
  width: 24px;
  display: flex;
  align-items: center;
  justify-content: center;
  padding-top: 10px;
  &::before {
    content: "";
    width: 1px;
    height: 17px;
    background: repeating-linear-gradient(#b6b6b6 0 1px, transparent 1px 3px);
  }
`;
const Controls = styled.div`
  width: 284px;
  display: flex;
  flex-direction: column;
`;
const ControlHead = styled.div`
  height: 20px;
  margin: 0 -8px 0 -5px;
  display: flex;
  align-items: center;
  gap: 2px;
`;
const Line = styled.div<{ $h: number; $gap?: number; $pt?: number }>`
  height: ${(p) => p.$h}px;
  flex: none;
  display: flex;
  align-items: center;
  gap: ${(p) => p.$gap ?? 0}px;
  padding-top: ${(p) => p.$pt ?? 0}px;
`;
const Half = styled.div`
  width: 139px;
  display: flex;
  align-items: center;
`;
const Combo = styled.div`
  height: 22px;
  flex: none;
  border: 1px solid #a6a6a6;
  border-radius: 2px;
  background: linear-gradient(#fdfdfd, #ececec);
  display: flex;
  align-items: center;
  justify-content: space-between;
  padding: 0 4px 0 4px;
`;
const Button = styled.div<{ $w?: number; $h: number }>`
  ${(p) => p.$w && css`width: ${p.$w}px;`}
  height: ${(p) => p.$h}px;
  flex: none;
  border: 1px solid #adadad;
  border-radius: 2px;
  background: linear-gradient(#fff, #ececec);
  display: flex;
  align-items: center;
  justify-content: center;
`;
const FieldRow = styled.div<{ $sel?: boolean }>`
  height: 26px;
  display: flex;
  align-items: center;
  gap: 6px;
  padding-left: 3px;
  background: ${(p) => (p.$sel ? "#efefef" : "transparent")};
`;
const FieldName = styled.span`
  font-size: 11.5px;
  letter-spacing: -0.05px;
`;
const FilterText = styled.div`
  padding: 3px 0 0 4px;
  font-size: 11px;
  line-height: 16px;
  letter-spacing: -0.35px;
`;
const PairBoxes = styled.div`
  display: flex;
  justify-content: space-between;
`;

const Defs = () => (
  <svg width="0" height="0">
    <defs>
      <linearGradient id="py" x1="0" y1="0" x2="0" y2="1"><stop offset="0" stopColor="#ffd04a" /><stop offset="1" stopColor="#f58a00" /></linearGradient>
      <linearGradient id="pb" x1="0" y1="0" x2="0" y2="1"><stop offset="0" stopColor="#2fc0ee" /><stop offset="1" stopColor="#156d97" /></linearGradient>
      <linearGradient id="pg" x1="0" y1="0" x2="0" y2="1"><stop offset="0" stopColor="#9cc75f" /><stop offset="1" stopColor="#4b7a12" /></linearGradient>
      <linearGradient id="pr" x1="0" y1="0" x2="0" y2="1"><stop offset="0" stopColor="#f8993f" /><stop offset="1" stopColor="#c93a12" /></linearGradient>
      <linearGradient id="pd" x1="0" y1="0" x2="0" y2="1"><stop offset="0" stopColor="#ededed" /><stop offset="1" stopColor="#d0d0d0" /></linearGradient>
      <linearGradient id="edge" x1="0" y1="0" x2="1" y2="1"><stop offset="0" stopColor="#35c1f1" /><stop offset="1" stopColor="#0c59a4" /></linearGradient>
      <linearGradient id="edgeTop" x1="0" y1="0" x2="1" y2=".5"><stop offset="0" stopColor="#35b5e9" /><stop offset="1" stopColor="#62d85c" /></linearGradient>
      <linearGradient id="cloud" x1="0" y1="0" x2="0" y2="1"><stop offset="0" stopColor="#f4f8ff" /><stop offset="1" stopColor="#a9c6f2" /></linearGradient>
    </defs>
  </svg>
);
type FieldKind = "pie" | "doc" | "bars";
const FieldIcon = ({ kind }: { kind: FieldKind }) => (
  <Ico s={24}>
    {kind === "pie" && (
      <g>
        <path d="M12 1.500a10.500 10.500 0 0 1 0 21z" fill="url(#py)" />
        <path d="M12 1.500a10.500 10.500 0 0 0-9.900 14L12 12z" fill="url(#pb)" />
        <path d="M2.100 15.500A10.500 10.500 0 0 0 12 22.500V12z" fill="url(#pg)" />
        <path d="M12 1.500v21M12 12l-9.900 3.500" stroke="#5b7a45" strokeWidth=".5" />
      </g>
    )}
    {kind === "doc" && (
      <g>
        <path d="M4 1.500h16l1.500 1.500v16L18 22.500H4L2.500 21V3z" fill="url(#pd)" stroke="#b5b5b5" />
        <path d="M5.500 5h13.500" stroke="#b2b2b2" strokeWidth="2" /><path d="M5.500 9h13.500M5.500 13h13.500M5.500 16.500h8" stroke="#909090" strokeWidth="1.100" />
        <path d="M21.500 19H18v3.500z" fill="#fff" stroke="#aaa" strokeWidth=".7" />
      </g>
    )}
    {kind === "bars" && (
      <g>
        <path d="M1.500 22.800h21" stroke="#c9c9c9" strokeWidth="1.200" />
        <rect x="2.500" y="13" width="5.800" height="9" rx="1" fill="url(#pr)" /><rect x="9" y="7" width="6" height="15" rx="1" fill="url(#pb)" /><rect x="15.600" y="2" width="6.200" height="20" rx="1" fill="url(#pg)" />
      </g>
    )}
  </Ico>
);
const Field = ({ kind, name, sel }: { kind: FieldKind; name: string; sel?: boolean }) => (
  <FieldRow $sel={sel}><FieldIcon kind={kind} /><FieldName>{name}</FieldName></FieldRow>
);
const fields: [FieldKind, string][] = [
  ["pie", "ELEV"], ["pie", "fk_region"], ["pie", "ID"], ["doc", "NAME"], ["doc", "USE"], ["bars", "average"],
  ["bars", "count"], ["bars", "max"], ["bars", "median"], ["bars", "min"], ["bars", "stand.dev."], ["bars", ""],
];

const GroupStats = () => (
  <Dialog>
    <DialogTitle>
      <QgisLogo s={17} />
      <Text>Group Stats</Text>
      <Spacer />
      <WinButtons $c="#000" $gap={35} $pad={17}><WinIcons /></WinButtons>
    </DialogTitle>
    <DialogMenu>
      <Text><Key>D</Key>ata</Text>
      <Text>Feat<Key>u</Key>res</Text>
      <Text>W<Key>i</Key>ndow</Text>
      <Text>He<Key>l</Key>p</Text>
    </DialogMenu>
    <DialogBody>
      <Result>
        <HeadRow>
          <HeadCell $w={46}><Spacer $w={15} /><Text>1</Text><Spacer $w={8} /><Drop $w={8} /></HeadCell>
          <HeadCell $w={40}><Text>2</Text></HeadCell>
        </HeadRow>
        <GridRow>
          <RowHead><Text>1</Text><SortTick /></RowHead>
          <Cell $w={35} $tint /><Cell $w={40} $tint />
        </GridRow>
        <GridRow>
          <RowHead><Text>2</Text></RowHead>
          <Cell $w={35} $tint /><Cell $w={40}><Text $ls={-0.5}>593,25</Text></Cell>
        </GridRow>
        <Gutter />
      </Result>
      <SideGrip />
      <Controls>
        <ControlHead><Text $ls={-0.05}>Control panel</Text><Spacer /><DockBtn /><DockBtn close /></ControlHead>
        <Line $h={27} $pt={2}><Text $size={11} $ls={-0.2}>Layers</Text></Line>
        <Combo><Text $size={11} $ls={-0.2}>airports</Text><Drop /></Combo>
        <Line $h={25}><Text $size={11} $ls={-0.2}>Fields</Text></Line>
        <Panel $w={284} $h={300}>
          <List>{fields.map(([k, n]) => <Field key={n} kind={k} name={n} sel={n === "average"} />)}</List>
          <Bar><BarEnd /><Thumb $h={213} /><Spacer /><BarEnd $down /></Bar>
        </Panel>
        <Line $h={32} $gap={6}>
          <Half><Button $w={38} $h={20}><Text $size={11} $ls={-0.2}>Filter</Text></Button></Half>
          <Half><Text $size={11} $ls={-0.35}>Columns</Text></Half>
        </Line>
        <PairBoxes>
          <Panel $w={139} $h={70}><FilterText>"USE" ILIKE 'Military'</FilterText></Panel>
          <Panel $w={139} $h={70} />
        </PairBoxes>
        <Line $h={31} $gap={6}>
          <Half><Text $size={11} $ls={-0.3}>Rows</Text></Half>
          <Half><Text $size={11} $ls={-0.4}>Value</Text><Spacer $w={10} /><CheckBox on /><Spacer $w={4} /><Text $size={11} $ls={-0.4}>use NULL values</Text></Half>
        </Line>
        <PairBoxes>
          <Panel $w={139} $h={70} />
          <Panel $w={139} $h={70}><List><Field kind="bars" name="average" /><Field kind="pie" name="ELEV" /></List></Panel>
        </PairBoxes>
        <Line $h={33}>
          <CheckBox /><Spacer $w={4} /><Text $size={11} $ls={-0.25}>Use only selected features</Text><Spacer /><Button $w={80} $h={21}><Text $size={11} $ls={-0.3}>Clear</Text></Button>
        </Line>
        <Button $h={21}><Text $size={11} $ls={-0.3}>Calculate</Text></Button>
      </Controls>
    </DialogBody>
  </Dialog>
);

/* ---------- Windows taskbar ---------- */
const Taskbar = styled.div`
  height: 40px;
  flex: none;
  display: flex;
  align-items: center;
  color: #fff;
  background: linear-gradient(90deg, #26323a 0, #2b363c 5%, #3a3d40 28%, #403f40 55%, #34302f 63%, #2a231d 75%, #30261e 100%);
`;
const StartBtn = styled.div`
  width: 48px;
  display: flex;
  justify-content: center;
`;
const TaskSearch = styled.div`
  width: 289px;
  height: 40px;
  background: #333;
  border: 1px solid #666;
  border-width: 1px 1px 0 1px;
  display: flex;
  align-items: center;
  gap: 10px;
  padding-left: 12px;
`;
const TaskSlot = styled.div<{ $w?: number; $run?: boolean; $active?: boolean }>`
  width: ${(p) => p.$w ?? 49}px;
  height: 40px;
  display: flex;
  align-items: center;
  justify-content: center;
  ${(p) => p.$run && css`
    background: linear-gradient(#76b9ed, #76b9ed) center bottom / 41px 2px no-repeat;
  `}
  ${(p) => p.$active && css`
    background: linear-gradient(#76b9ed, #76b9ed) center bottom / 100% 2px no-repeat, #62625f;
  `}
`;
const Tray = styled.div`
  display: flex;
  align-items: center;
`;
const Clock = styled.div`
  width: 70px;
  display: flex;
  flex-direction: column;
  align-items: center;
  font-size: 11.5px;
  letter-spacing: -0.4px;
  span { line-height: 18px; }
`;

const TaskbarView = () => (
  <Taskbar>
    <StartBtn><Ico s={17} vb="0 0 17 17"><path d="M0 2.400L7.500 1.300V8H0zM8.300 1.200L17 0v8H8.300zM0 8.900h7.500v6.800L0 14.600zM8.300 8.900H17v8l-8.700-1.200z" fill="#fff" /></Ico></StartBtn>
    <TaskSearch>
      <Ico s={17} vb="0 0 17 17"><circle cx="10.500" cy="6" r="5" stroke="#eee" strokeWidth="1.300" /><path d="M7 9.500L1 16" stroke="#eee" strokeWidth="1.300" /></Ico>
      <Text $size={14} $ls={0} $color="#d4d4d4">Wyszukaj</Text>
    </TaskSearch>
    <TaskSlot $w={48}>
      <Ico s={16} vb="0 0 16 16"><path d="M.5 4.500h10v7H.500zM.5.500v2h10v-2M.5 15.500v-2h10v2M14.500 0v4M14.500 8v8" stroke="#eee" /><path d="M13.500 4.500h2v2.500h-2z" fill="#eee" /></Ico>
    </TaskSlot>
    <TaskSlot $w={51}>
      <Ico s={25}><circle cx="12" cy="12" r="11.500" fill="url(#edge)" /><path d="M1 9.500C3 3 8 .5 12.500.5c6.500 0 11 4.500 11 9.500 0 4-3 5.500-6.500 5.500-2 0-3.500-.8-2.500-2 1.500-2.500-.5-6-4.500-6C6 7.500 3 8 1 9.500z" fill="url(#edgeTop)" /><path d="M9.500 10.500c-2.500 4 0 9.500 5 10.500 3 .5 5.500-.5 7-2-2 3.500-6 5-10 4.500-4-1-6-6-2-13z" fill="#0b4d93" /></Ico>
    </TaskSlot>
    <TaskSlot $run>
      <Ico s={24}><path d="M1 2.500h8l2 2.500v4H1z" fill="#e3a008" /><path d="M1 5h21.500v16H1z" fill="#fcd667" /><path d="M5 13.500h13.500V21H15v-3.500H8.500V21H5z" fill="#3f8fd6" /><path d="M1 20h4v1H1zM18.500 20h4v1h-4z" fill="#e3a008" /></Ico>
    </TaskSlot>
    <TaskSlot>
      <Ico s={25}><path d="M2 3C5 .5 8 1 10 2c3-1.500 9-2 12 .5 2 3-1 9-4 12.500l4 .5c-1 2.500-4 2.500-5.500 2V23h-4l-1-8-2.500 2.500C5 18.500 3 14 2 9.500 1.300 6.500 1 4.500 2 3z" fill="#356b9c" stroke="#b9c8d6" /><path d="M9.500 3.500c-1.500 4-.5 9 .5 11.500M16 3.500c2 4 0 9-1 12" stroke="#d5e0ea" /></Ico>
    </TaskSlot>
    <TaskSlot>
      <Ico s={24}><path d="M8 6V2.500h8V6" stroke="#38b6ee" strokeWidth="2" /><rect x="1" y="5.500" width="22" height="17" rx="1.500" fill="#f2f2f2" /><path d="M7.500 9h4v4h-4z" fill="#f04e23" /><path d="M12.500 9h4v4h-4z" fill="#7fb900" /><path d="M7.500 14h4v4h-4z" fill="#00a3ee" /><path d="M12.500 14h4v4h-4z" fill="#ffb800" /></Ico>
    </TaskSlot>
    <TaskSlot>
      <Ico s={25}><path d="M0 9L12 1l12 8v13H0z" fill="#1565b5" /><path d="M1 8.500h22L12 17z" fill="#f5f9fd" /><path d="M0 9l12 8 12-8v13.500H0z" fill="#2ba4ee" /><path d="M0 22.500L24 9v13.500z" fill="#1e8fe0" /></Ico>
    </TaskSlot>
    <TaskSlot $run>
      <Ico s={27} vb="0 0 27 27"><circle cx="14" cy="4.500" r="3.500" fill="#7b83eb" /><circle cx="21" cy="5.500" r="2.600" fill="#5059c9" /><path d="M8 9h16v9a7 7 0 0 1-14 0z" fill="#6870dd" /><rect x="1" y="7" width="12" height="12" rx="1.200" fill="#4b53bc" /><path d="M4.500 10.500h5.500M7.250 10.500v6" stroke="#fff" strokeWidth="1.500" /><circle cx="19" cy="19" r="7.300" fill="#d13438" stroke="#40262b" strokeWidth=".6" /></Ico>
    </TaskSlot>
    <TaskSlot $run>
      <Ico s={25}><circle cx="12" cy="12" r="11.500" fill="#fff" /><path d="M12 .5a11.500 11.500 0 0 1 10 5.800H12a5.700 5.700 0 0 0-5.300 3.500L2.200 5.800A11.500 11.500 0 0 1 12 .5z" fill="#e33b2e" /><path d="M22 6.300A11.500 11.500 0 0 1 11.500 23.500l5.500-8.700a5.700 5.700 0 0 0-1-8.500z" fill="#fbc116" /><path d="M2.200 5.800L7 14.700a5.700 5.700 0 0 0 7 2.500l-2.500 6.300A11.500 11.500 0 0 1 2.200 5.800z" fill="#2da94f" /><circle cx="12" cy="12" r="5.700" fill="#fff" /><circle cx="12" cy="12" r="4.500" fill="#4285f4" /></Ico>
    </TaskSlot>
    <TaskSlot $active><QgisLogo s={26} /></TaskSlot>
    <Spacer />
    <Tray>
      <Ico s={26} h={24} vb="0 0 26 24"><path d="M5 22a5 5 0 0 1 0-9.500C5 8 8 6 11.500 6c3.500 0 6 2 6.500 5.500 4-.5 7 2 7 5.500 0 3-2 5-5 5z" fill="url(#cloud)" /><circle cx="19" cy="7" r="6.200" fill="#c42b1c" /><text x="16.700" y="10.500" fontSize="9.500" fill="#fff">1</text></Ico>
      <Spacer $w={7} />
      <Text $size={13} $ls={-0.2}>0°C</Text><Spacer $w={9} /><Text $size={13} $ls={0}>Pochmurnie</Text>
      <Spacer $w={24} />
      <Ico s={12} h={8} vb="0 0 12 8"><path d="M.5 7L6 1.500 11.500 7" stroke="#fff" strokeWidth="1.200" /></Ico>
      <Spacer $w={12} />
      <Ico s={14} h={18} vb="0 0 14 18"><rect x="1.500" y="5.500" width="7.500" height="7" rx="1.500" stroke="#fff" /><path d="M9.500 8.500l2.500-2v5l-2.500-2M2 2.500c2-2 5-2 7 0M2 15.500c2 2 5 2 7 0" stroke="#fff" /></Ico>
      <Spacer $w={10} />
      <Ico s={12} h={18} vb="0 0 12 18"><rect x="3" y="1" width="6" height="11" rx="3" fill="#fff" /><path d="M1 8v2.500c0 2 2 4 5 4s5-2 5-4V8M6 14.500V17" stroke="#fff" /></Ico>
      <Spacer $w={11} />
      <Ico s={16} h={10} vb="0 0 16 10"><rect x=".5" y=".500" width="13" height="8.500" stroke="#fff" /><path d="M2.500 2.500h7v4.500h-7z" fill="#fff" /><path d="M15 3v4" stroke="#fff" strokeWidth="1.500" /></Ico>
      <Spacer $w={9} />
      <Ico s={14} vb="0 0 14 14"><path d="M1 12A11 11 0 0 1 12.500 1.500" stroke="#999" /><path d="M3.500 12.500A8.500 8.500 0 0 1 12.500 4.500M6 12.800A6 6 0 0 1 12.500 7.300M8.500 13a3.500 3.500 0 0 1 4-3" stroke="#fff" /><circle cx="11.500" cy="12.300" r="1.200" fill="#fff" /></Ico>
      <Spacer $w={8} />
      <Ico s={15} h={14} vb="0 0 15 14"><path d="M.5 5h2L6 1.500v11L2.500 9h-2zM9 5l4.500 4.500M13.500 5L9 9.500" stroke="#fff" strokeWidth="1.100" /></Ico>
      <Spacer $w={4} />
      <Clock><span>15:17</span><span>12.11.2024</span></Clock>
      <Spacer $w={9} />
      <Ico s={26} vb="0 0 26 26"><path d="M1 2h16v13h-8l-4 4v-4H1z" fill="#fff" /><path d="M3.500 5.500h11M3.500 8.500h11M3.500 11.500h7" stroke="#3a2f27" /><circle cx="17" cy="18" r="8" fill="#37322e" stroke="#8b8782" /><text x="14" y="22.500" fontSize="12" fontWeight="600" fill="#fff">1</text></Ico>
      <Spacer $w={16} />
    </Tray>
  </Taskbar>
);

const Slots = ({ names }: { names: string[] }) => (
  <>{names.map((n) => <Slot key={n} $active={n === "hand"}>{I[n]}</Slot>)}</>
);

export default function App() {
  return (
    <Desktop>
      <Global />
      <TitleBar>
        <QgisLogo s={17} /><Spacer $w={4} /><Text $ls={-0.02}>cw4_MORAWIEC — QGIS</Text>
        <Spacer />
        <WinButtons $c="#8a8a8a" $gap={34.5} $pad={19}><WinIcons restore /></WinButtons>
      </TitleBar>
      <MenuBar>
        <Text>Projekt</Text>
        <Text><Key>E</Key>dycja</Text>
        <Text><Key>W</Key>idok</Text>
        <Text>W<Key>a</Key>rstwa</Text>
        <Text><Key>U</Key>stawienia</Text>
        <Text><Key>W</Key>tyczki</Text>
      </MenuBar>
      <Toolbar $h={40}>
        <Grip $w={12} />
        <Slots names={["newDoc", "open", "save", "layout", "manager", "style"]} />
        <Grip />
        <Slots names={["hand", "panSel", "zoomIn"]} />
        <Spacer $w={567} />
        <Drop /><Slots names={["note"]} /><Drop /><Grip />
        <Slots names={["identify", "abacus", "gear", "sigma", "table"]} /><Drop />
        <Slots names={["ruler"]} /><Drop />
        <Slots names={["tip", "action"]} /><Drop $c="#aaa" />
      </Toolbar>
      <Toolbar $h={39} $lift={2}>
        <Grip $w={12} />
        <Slots names={["dsm", "gpkg", "shp", "feather", "chip", "mesh", "virtual"]} />
        <Grip />
        <Slots names={["pencils", "pencil"]} />
        <Spacer $w={548} />
        <Slot><LabelTag kind="ball" /></Slot><Slot><LabelTag kind="eye" /></Slot><Slot><LabelTag kind="arrow" /></Slot><Slot><LabelTag kind="rotate" /></Slot><Slot><LabelTag kind="edit" /></Slot>
        <Grip /><Slots names={["globe"]} />
        <Grip /><Slots names={["python"]} />
        <Grip /><Slots names={["help"]} />
        <Grip /><Slots names={["refreshTable"]} />
      </Toolbar>
      <Body>
        <Docks>
          <DockHead $h={19}><Text>Przeglądarka</Text><Spacer /><DockBtn /><DockBtn close /></DockHead>
          <DockTools $h={31}>
            <Ico s={16} vb="0 0 16 16"><path d="M1.500 1.500h11.500v11.500h-11.500z" stroke="#777" fill="#f2f2f2" /><circle cx="12.500" cy="13" r="3" fill="#6a9f6a" stroke="#efefef" /><path d="M12.500 11.500v3M11 13h3" stroke="#fff" /></Ico>
            <Ico s={16} vb="0 0 16 16"><path d="M1 7c0-5 8-7.500 11.500-4L14.500 1v6H8.500l2-2C8 3 5 4 4.500 7zM15 9c0 5-8 7.500-11.500 4L1.500 15V9h6l-2 2c2.500 2 5.500 1 6-2z" fill="#5b8fd0" stroke="#4273b0" strokeWidth=".5" /></Ico>
            {funnel()}
            {treeArrow(true)}
            <Ico s={16} vb="0 0 16 16"><circle cx="8" cy="8" r="6.500" fill="#6b93c3" stroke="#4d76a6" /><text x="6" y="12" fontSize="11" fontStyle="italic" fontWeight="700" fontFamily="Liberation Serif, serif" fill="#fff">i</text></Ico>
          </DockTools>
          <Panel $h={225}>
            <List>
              {browser.map(([n, t, icon]) => (
                <TreeRow key={n}><Twist $on={t} /><TreeIcon>{icon}</TreeIcon><Text>{n}</Text></TreeRow>
              ))}
            </List>
            <Bar><BarEnd /><Thumb $h={131} /><Spacer /><BarEnd $down /></Bar>
          </Panel>
          <Splitter $h={6} />
          <DockHead $h={19}><Text>Warstwy</Text><Spacer /><DockBtn /><DockBtn close /></DockHead>
          <DockTools $h={31}>
            <Ico s={16} vb="0 0 16 16"><path d="M9 6.500l5-4 1 1-3.500 5z" fill="#e0a93c" /><path d="M6.500 5.500l5 4-2.500 2.500-5-4.500z" fill="#ecc95a" /><path d="M1 7l3.500-1.500 4.500 5.500-2 2.500z" fill="#d8504a" /><path d="M2.500 10l2.500 3 2.500 1-1-2.500z" fill="#4a7fd0" /></Ico>
            <Ico s={16} vb="0 0 16 16"><path d="M1.500 6.500h8v8.500h-8zM4.500 6V4h8v9M7.500 4V1.500h6v9" stroke="#777" /><path d="M8 2v9M6.500 3.500L8 2l1.500 1.500" stroke="#3f6fa8" strokeWidth="1.200" /><rect x="10" y="10" width="6" height="6" fill="#589c6a" /><path d="M13 11v4M11 13h4" stroke="#fff" /></Ico>
            <Ico s={16} vb="0 0 17 16"><path d="M1 8c4-5 11-5 15 0-4 4.500-11 4.500-15 0z" fill="#fff" stroke="#999" /><circle cx="8.500" cy="7.500" r="3.200" fill="#5b86b8" /><circle cx="8.500" cy="7.500" r="1.300" fill="#111" /><path d="M1 4.500c4-4 11-4 15 0" stroke="#aaa" /><path d="M12 13h5l-2.500 2.500z" fill="#555" /></Ico>
            {funnel(true)}
            <ToolWithMenu>
              <Ico s={16} vb="0 0 16 16"><path d="M7.500 1.500C4.500-.2 2 1.500 2.500 3.500c.2 1 1.200 1.600 2.500 1.600C3.500 5.200 1.800 6 1.800 7.600 2 10 5.500 10.500 8 9" stroke="#7b4a85" strokeWidth="1.500" /><path d="M9 15V9.500h5.500V15M9 12h5.500" stroke="#aaa" strokeWidth="1.700" /></Ico>
              <Drop $w={8} />
            </ToolWithMenu>
            {treeArrow(false)}
            {treeArrow(true)}
            <Ico s={16} vb="0 0 16 16"><path d="M1.500 1.500h11v11h-11z" stroke="#888" fill="#f2f2f2" /><rect x="8" y="10.500" width="7" height="4.500" rx="1.500" fill="#e04848" /><path d="M9.500 12.700h4" stroke="#fff" strokeWidth="1.200" /></Ico>
          </DockTools>
          <Panel $h={248}>
            <List>
              {layers.map((l) => (
                <LayerRow key={l.n} $sel={l.u}>
                  <CheckBox on={l.on} />
                  <Swatch $c={l.c} $kind={l.k} />
                  <LayerName $on={l.on} $u={l.u}>{l.n}</LayerName>
                </LayerRow>
              ))}
            </List>
          </Panel>
        </Docks>
        <MapView><MapDrawing /></MapView>
      </Body>
      <StatusBar>
        <Locator>
          <Ico s={13} vb="0 0 13 13"><circle cx="5.500" cy="5.500" r="4.300" stroke="#888" strokeWidth="1.200" /><path d="M8.500 8.500l4 4" stroke="#888" strokeWidth="1.600" /></Ico>
          <Text $size={11} $ls={-0.1}>Szukana fraza (Ctrl+K)</Text>
        </Locator>
        <Spacer />
        <Text $size={11}>Powiększenie</Text><Spacer $w={4} />
        <Spin $w={84}><Text $size={11}>100%</Text><SpinBtns /></Spin><Spacer $w={9} />
        <Text $size={11}>Obrót</Text><Spacer $w={9} />
        <Spin $w={84}><Text $size={11}>0,0 °</Text><SpinBtns /></Spin><Spacer $w={6} />
        <CheckBox on /><Spacer $w={4} /><Text $size={11} $ls={-0.2}>Renderuj</Text><Spacer $w={16} />
        <Ico s={15} vb="0 0 15 15"><path d="M.5 7.500L4 3l3.500-1.500L11 3l3.500 4.500L11 12l-3.500 1.500L4 12z" fill="#aaa" stroke="#666" /><path d="M7.500 1v13M1 7.500h13M3 4.500h9M3 10.500h9" stroke="#555" strokeWidth=".8" /><ellipse cx="7.500" cy="7.500" rx="3" ry="5.500" stroke="#555" strokeWidth=".8" /></Ico>
        <Spacer $w={1} /><Text $size={11} $ls={-0.15}>EPSG:2964</Text><Spacer $w={23} />
        <Ico s={16} vb="0 0 16 16"><path d="M8 1.500c4.500 0 7.500 2 7.500 5.500 0 2-1 3.500-2 4.200l1 3.300-4-2.500C4 12.500.5 10.500.5 7S3.500 1.500 8 1.500z" fill="#666" /><circle cx="4.500" cy="7" r="1" fill="#fff" /><circle cx="8" cy="7" r="1" fill="#fff" /><circle cx="11.500" cy="7" r="1" fill="#fff" /></Ico>
        <Spacer $w={7} />
      </StatusBar>
      <TaskbarView />
      <GroupStats />
      <Defs />
    </Desktop>
  );
}
